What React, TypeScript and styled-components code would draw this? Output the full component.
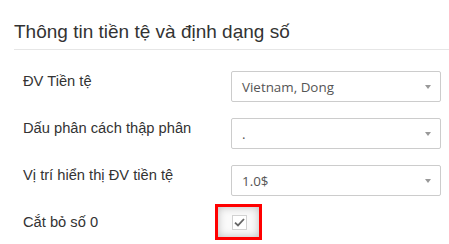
import { Fragment } from 'react';
import styled, { createGlobalStyle } from 'styled-components';

const GlobalStyle = createGlobalStyle`
  html, body {
    margin: 0;
    padding: 0;
    background: #fff;
  }
  body {
    font-family: "Liberation Sans", Arial, sans-serif;
    color: #333;
  }
`;

const Panel = styled.div`
  width: 449px;
  height: 244px;
  overflow: hidden;
  background: #fff;
`;

const Header = styled.div`
  margin-left: 14px;
  padding-top: 20px;
  border-bottom: 1px solid #e6e6e6;
  height: 29px;
`;

const Title = styled.h2`
  margin: 0;
  font-size: 19px;
  font-weight: 400;
  line-height: 24px;
  color: #333;
`;

const Form = styled.div`
  display: grid;
  grid-template-columns: 208px 210px;
  grid-auto-rows: 31px;
  row-gap: 16px;
  padding: 21px 0 0 23px;
`;

const Label = styled.label`
  font-size: 14.7px;
  line-height: 20px;
  color: #333;
`;

const Select = styled.div`
  display: flex;
  align-items: center;
  box-sizing: border-box;
  height: 31px;
  padding: 0 9px 0 10px;
  border: 1px solid #ccc;
  border-radius: 2px;
  background: #fff;
  font-family: "Open Sans", "Liberation Sans", sans-serif;
  font-size: 13.4px;
  color: #555;
`;

const Arrow = styled.span`
  margin-left: auto;
  width: 0;
  height: 0;
  border-left: 3px solid transparent;
  border-right: 3px solid transparent;
  border-top: 4px solid #999;
`;

const Highlight = styled.div`
  box-sizing: border-box;
  width: 47px;
  height: 36px;
  margin: -8px 0 0 -16px;
  padding: 8px 0 0 14px;
  border: 3px solid #f00;
  box-shadow: inset 0 0 8px rgba(0, 0, 0, 0.25);
  background: #fafafa;
`;

const CheckBox = styled.span`
  display: flex;
  align-items: center;
  justify-content: center;
  box-sizing: border-box;
  width: 15px;
  height: 15px;
  border: 1px solid #d2d2d2;
  background: #fff;
`;

const fields = [
  { label: 'ĐV Tiền tệ', value: 'Vietnam, Dong' },
  { label: 'Dấu phân cách thập phân', value: '.' },
  { label: 'Vị trí hiển thị ĐV tiền tệ', value: '1.0$' },
];

export default function App() {
  return (
    <>
      <GlobalStyle />
      <Panel>
        <Header>
          <Title>Thông tin tiền tệ và định dạng số</Title>
        </Header>
        <Form>
          {fields.map((f) => (
            <Fragment key={f.label}>
              <Label>{f.label}</Label>
              <Select>
                <span>{f.value}</span>
                <Arrow />
              </Select>
            </Fragment>
          ))}
          <Label>Cắt bỏ số 0</Label>
          <div>
            <Highlight>
              <CheckBox>
                <svg width="11" height="9" viewBox="0 0 11 9">
                  <path d="M1 4.6 L4 7.4 L10 1" fill="none" stroke="#666" strokeWidth="1.8" />
                </svg>
              </CheckBox>
            </Highlight>
          </div>
        </Form>
      </Panel>
    </>
  );
}
